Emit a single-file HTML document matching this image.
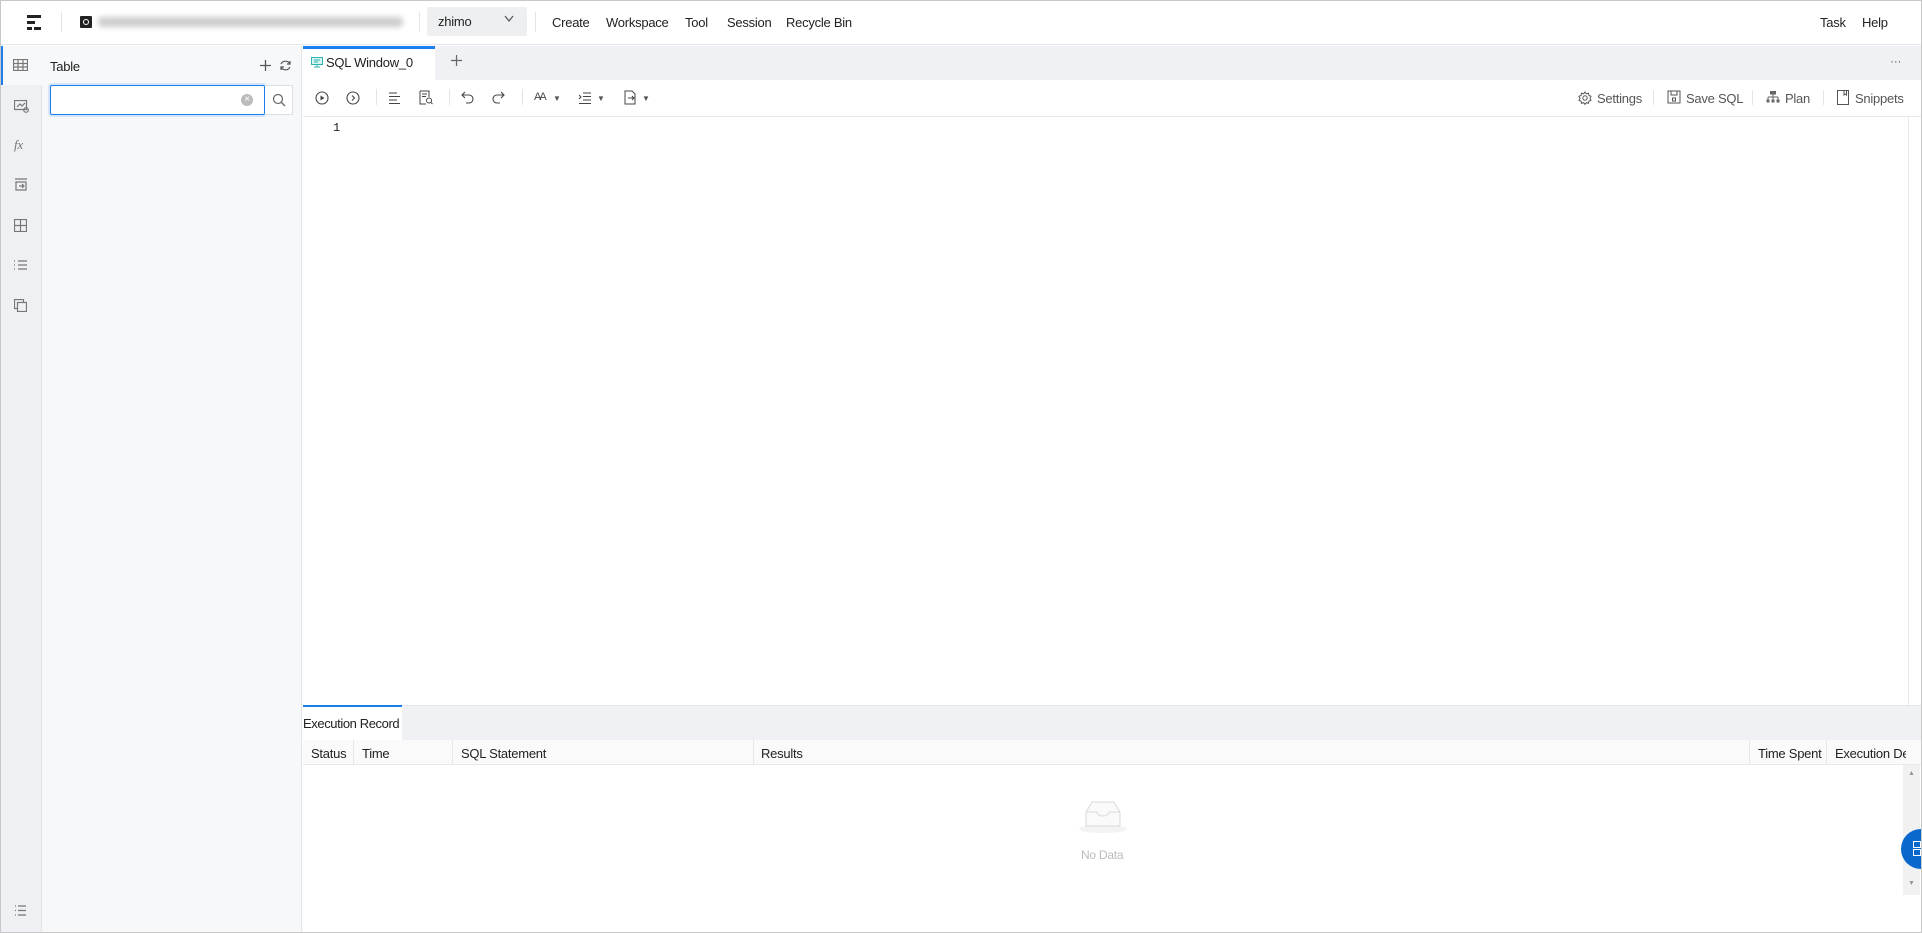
<!DOCTYPE html>
<html><head><meta charset="utf-8"><style>
*{box-sizing:border-box;margin:0;padding:0}
body{width:1922px;height:933px;overflow:hidden;font-family:"Liberation Sans","Noto Sans CJK SC",sans-serif;font-size:13px;letter-spacing:-0.25px;color:#333;background:#fff;position:relative}
.a{position:absolute}
.frame{left:0;top:0;width:1922px;height:933px;border:1px solid #c8c8c8;pointer-events:none;z-index:10}
svg{display:block}
.ic{stroke:#777;fill:none;stroke-width:1.2}
</style></head><body>
<div class="a frame"></div>
<div class="a" style="left:0;top:0;width:1922px;height:45px;border-bottom:1px solid #e4e6ea;background:#fff"></div>
<div class="a" style="left:27px;top:15px"><svg width="16" height="15"><rect x="0" y="0" width="14" height="3" fill="#222"/><rect x="0" y="6" width="8" height="3" fill="#222"/><rect x="0" y="12" width="5" height="3" fill="#222"/><rect x="7" y="12" width="7" height="3" fill="#222"/></svg></div>
<div class="a" style="left:61px;top:12px;width:1px;height:20px;background:#e5e5e5"></div>
<div class="a" style="left:80px;top:16px;width:12px;height:12px;background:#222;border-radius:1px"><div style="margin:3px;width:6px;height:6px;border:1.5px solid #fff;border-radius:50%"></div></div>
<div class="a" style="left:98px;top:17px;width:305px;height:10px;background:#ccc;filter:blur(3px);border-radius:4px"></div>
<div class="a" style="left:419px;top:12px;width:1px;height:20px;background:#e5e5e5"></div>
<div class="a" style="left:427px;top:7px;width:100px;height:29px;background:#eeeff1;border-radius:2px"></div>
<div class="a" style="left:438px;top:14px;font-size:13px;color:#222">zhimo</div>
<div class="a" style="left:504px;top:15px"><svg width="10" height="8"><path d="M1 1 L5 6 L9 1" stroke="#555" fill="none" stroke-width="1.2"/></svg></div>
<div class="a" style="left:535px;top:12px;width:1px;height:20px;background:#e5e5e5"></div>
<div class="a" style="left:552px;top:15px;color:#222">Create</div>
<div class="a" style="left:606px;top:15px;color:#222">Workspace</div>
<div class="a" style="left:685px;top:15px;color:#222">Tool</div>
<div class="a" style="left:727px;top:15px;color:#222">Session</div>
<div class="a" style="left:786px;top:15px;color:#222">Recycle Bin</div>
<div class="a" style="left:1820px;top:15px;color:#222">Task</div>
<div class="a" style="left:1862px;top:15px;color:#222">Help</div>
<div class="a" style="left:1px;top:46px;width:41px;height:886px;background:#eef0f3;border-right:1px solid #e2e4e8"></div>
<div class="a" style="left:1px;top:46px;width:41px;height:39px;background:#f7f8fa;border-left:2px solid #1a7df0"></div>
<div class="a" style="left:13px;top:59px"><svg width="15" height="12"><rect x=".5" y=".5" width="14" height="11" class="ic"/><path d="M.5 4.5H14.5M.5 8H14.5M5 .5V11.5M10 .5V11.5" class="ic"/></svg></div>
<div class="a" style="left:14px;top:100px"><svg width="15" height="13"><rect x=".5" y=".5" width="12" height="9" class="ic"/><path d="M3 7L6 4L8 6L11 3" class="ic"/><circle cx="12" cy="10" r="2.3" class="ic"/></svg></div>
<div class="a" style="left:14px;top:137px;font-style:italic;color:#777;font-family:'Liberation Serif',serif;font-size:13px">fx</div>
<div class="a" style="left:14px;top:178px"><svg width="14" height="13"><path d="M1 1H13M2 4H12V12H2Z" class="ic"/><path d="M5 8H10M8 6L10 8L8 10" class="ic"/></svg></div>
<div class="a" style="left:14px;top:219px"><svg width="13" height="13"><rect x=".5" y=".5" width="12" height="12" class="ic"/><path d="M6.5 .5V12.5M.5 6.5H12.5" class="ic"/></svg></div>
<div class="a" style="left:13px;top:259px"><svg width="15" height="12"><path d="M5 2H14M5 6H14M5 10H14" class="ic"/><path d="M1 2H2M1 6H2M1 10H2" class="ic"/></svg></div>
<div class="a" style="left:14px;top:299px"><svg width="13" height="13"><rect x=".5" y=".5" width="9" height="9" class="ic"/><rect x="3.5" y="3.5" width="9" height="9" class="ic" style="fill:#eef0f3"/></svg></div>
<div class="a" style="left:14px;top:905px"><svg width="13" height="11"><path d="M4 1H12M4 5.5H12M4 10H12M1 1H2M1 5.5H2M1 10H2" class="ic"/></svg></div>
<div class="a" style="left:42px;top:46px;width:260px;height:886px;background:#f7f8fa;border-right:1px solid #e2e4e8"></div>
<div class="a" style="left:50px;top:59px;color:#222">Table</div>
<div class="a" style="left:259px;top:59px"><svg width="13" height="13"><path d="M6.5 1V12M1 6.5H12" stroke="#555" stroke-width="1.3"/></svg></div>
<div class="a" style="left:279px;top:59px"><svg width="13" height="13"><path d="M11 5A5 5 0 0 0 2 5M2 8A5 5 0 0 0 11 8M11 2V5H8M2 11V8H5" stroke="#555" fill="none" stroke-width="1.2"/></svg></div>
<div class="a" style="left:50px;top:85px;width:215px;height:30px;border:1px solid #1a7df0;border-radius:2px;background:#fff;box-shadow:0 0 0 2px rgba(26,125,240,.15)"></div>
<div class="a" style="left:241px;top:94px;width:12px;height:12px;border-radius:50%;background:#bbb;color:#fff;font-size:10px;line-height:12px;text-align:center">×</div>
<div class="a" style="left:265px;top:85px;width:28px;height:30px;border:1px solid #dcdfe4;border-left:none;background:#fff"></div>
<div class="a" style="left:272px;top:93px"><svg width="14" height="14"><circle cx="6" cy="6" r="4.5" stroke="#666" fill="none" stroke-width="1.2"/><path d="M9.5 9.5L13 13" stroke="#666" stroke-width="1.3"/></svg></div>
<div class="a" style="left:303px;top:46px;width:1618px;height:34px;background:#f0f1f4"></div>
<div class="a" style="left:303px;top:46px;width:132px;height:34px;background:#fff;border-top:3px solid #1a7df0"></div>
<div class="a" style="left:311px;top:57px"><svg width="12" height="11"><rect x=".5" y=".5" width="11" height="7" stroke="#2bb5b0" fill="#d9f3f2"/><path d="M3 10H9M6 8V10M3 3H9M3 5H7" stroke="#2bb5b0"/></svg></div>
<div class="a" style="left:326px;top:55px;color:#222">SQL Window_0</div>
<div class="a" style="left:450px;top:54px"><svg width="13" height="13"><path d="M6.5 1V12M1 6.5H12" stroke="#666" stroke-width="1.2"/></svg></div>
<div class="a" style="left:1890px;top:54px;color:#666;font-size:12px">···</div>
<div class="a" style="left:303px;top:80px;width:1618px;height:37px;background:#fff;border-bottom:1px solid #e8e8e8"></div>
<div class="a" style="left:315px;top:91px"><svg width="14" height="14"><circle cx="7" cy="7" r="6" stroke="#444" fill="none" stroke-width="1.1"/><path d="M5.5 4.5L9.5 7L5.5 9.5Z" fill="#444"/></svg></div>
<div class="a" style="left:346px;top:91px"><svg width="14" height="14"><circle cx="7" cy="7" r="6" stroke="#444" fill="none" stroke-width="1.1"/><path d="M6 4.5L8.5 7L6 9.5" stroke="#444" fill="none" stroke-width="1.1"/></svg></div>
<div class="a" style="left:376px;top:89px;width:1px;height:16px;background:#e5e5e5"></div>
<div class="a" style="left:388px;top:92px"><svg width="13" height="12"><path d="M1 1H9M1 4.5H12M1 8H9M1 11.5H12" stroke="#444" stroke-width="1"/></svg></div>
<div class="a" style="left:419px;top:90px"><svg width="14" height="15"><path d="M1 1H10V7M1 1V14H7" stroke="#444" fill="none"/><path d="M3 4H8M3 6.5H7" stroke="#444"/><circle cx="10" cy="10.5" r="2.5" stroke="#444" fill="none"/><path d="M12 12.5L13.5 14" stroke="#444"/></svg></div>
<div class="a" style="left:449px;top:89px;width:1px;height:16px;background:#e5e5e5"></div>
<div class="a" style="left:461px;top:91px"><svg width="13" height="13"><path d="M4 1L1 4L4 7M1 4H8A4 4 0 0 1 8 12H5" stroke="#444" fill="none" stroke-width="1.1"/></svg></div>
<div class="a" style="left:492px;top:91px"><svg width="13" height="13"><path d="M9 1L12 4L9 7M12 4H5A4 4 0 0 0 5 12H8" stroke="#444" fill="none" stroke-width="1.1"/></svg></div>
<div class="a" style="left:522px;top:89px;width:1px;height:16px;background:#e5e5e5"></div>
<div class="a" style="left:534px;top:91px;font-size:11px;color:#444;letter-spacing:-2px">AA</div>
<div class="a" style="left:553px;top:94px;font-size:8px;color:#555">▼</div>
<div class="a" style="left:578px;top:92px"><svg width="14" height="12"><path d="M5 1H13M5 4.5H13M5 8H13M1 11.5H13M1 3L3 5L1 7" stroke="#444" fill="none"/></svg></div>
<div class="a" style="left:597px;top:94px;font-size:8px;color:#555">▼</div>
<div class="a" style="left:624px;top:90px"><svg width="14" height="15"><path d="M1 1H8L11 4V14H1Z" stroke="#444" fill="none"/><path d="M4 8H10M8 6L10 8L8 10" stroke="#444" fill="none"/></svg></div>
<div class="a" style="left:642px;top:94px;font-size:8px;color:#555">▼</div>
<div class="a" style="left:1578px;top:91px"><svg width="14" height="14"><circle cx="7" cy="7" r="2.2" stroke="#555" fill="none"/><path d="M7 1L8.3 2.8L10.5 2.2L10.9 4.4L13 5.3L12 7.3L13 9.3L10.9 10.1L10.5 12.3L8.3 11.6L7 13.4L5.7 11.6L3.5 12.3L3.1 10.1L1 9.3L2 7.3L1 5.3L3.1 4.4L3.5 2.2L5.7 2.8Z" stroke="#555" fill="none"/></svg></div>
<div class="a" style="left:1597px;top:91px;color:#555">Settings</div>
<div class="a" style="left:1653px;top:90px;width:1px;height:15px;background:#e5e5e5"></div>
<div class="a" style="left:1667px;top:90px"><svg width="14" height="14"><path d="M1 1H13V13H1Z" stroke="#555" fill="none"/><path d="M4 1V5H10V1" stroke="#555" fill="none"/><rect x="5.5" y="8" width="3" height="3" stroke="#555" fill="none"/></svg></div>
<div class="a" style="left:1686px;top:91px;color:#555">Save SQL</div>
<div class="a" style="left:1752px;top:90px;width:1px;height:15px;background:#e5e5e5"></div>
<div class="a" style="left:1766px;top:90px"><svg width="14" height="14"><rect x="4" y="1" width="6" height="3.5" fill="#666"/><path d="M7 4.5V7M2 7H12M2 7V9.5M7 7V9.5M12 7V9.5" stroke="#666" fill="none"/><rect x="0.5" y="9.5" width="3" height="3" fill="#666"/><rect x="5.5" y="9.5" width="3" height="3" fill="#666"/><rect x="10.5" y="9.5" width="3" height="3" fill="#666"/></svg></div>
<div class="a" style="left:1785px;top:91px;color:#555">Plan</div>
<div class="a" style="left:1823px;top:90px;width:1px;height:15px;background:#e5e5e5"></div>
<div class="a" style="left:1837px;top:90px"><svg width="12" height="15"><path d="M.5 .5H11.5V14.5H.5Z" stroke="#555" fill="none"/><path d="M7 .5V5L8.3 4L9.5 5V.5" stroke="#555" fill="none"/></svg></div>
<div class="a" style="left:1855px;top:91px;color:#555">Snippets</div>
<div class="a" style="left:333px;top:121px;color:#222;font-family:'Liberation Mono',monospace;font-size:12px">1</div>
<div class="a" style="left:1908px;top:117px;width:1px;height:589px;background:#e8e8e8"></div>
<div class="a" style="left:303px;top:705px;width:1618px;height:35px;background:#f0f1f4;border-top:1px solid #e4e6ea"></div>
<div class="a" style="left:303px;top:705px;width:99px;height:35px;background:#fff;border-top:2px solid #1a7df0"></div>
<div class="a" style="left:303px;top:716px;color:#222;letter-spacing:-.4px">Execution Record</div>
<div class="a" style="left:303px;top:740px;width:1618px;height:25px;background:#fafafa;border-bottom:1px solid #e8e8e8"></div>
<div class="a" style="left:353px;top:740px;width:1px;height:25px;background:#e8e8e8"></div>
<div class="a" style="left:452px;top:740px;width:1px;height:25px;background:#e8e8e8"></div>
<div class="a" style="left:753px;top:740px;width:1px;height:25px;background:#e8e8e8"></div>
<div class="a" style="left:1749px;top:740px;width:1px;height:25px;background:#e8e8e8"></div>
<div class="a" style="left:1826px;top:740px;width:1px;height:25px;background:#e8e8e8"></div>
<div class="a" style="left:311px;top:746px;color:#222">Status</div>
<div class="a" style="left:362px;top:746px;color:#222">Time</div>
<div class="a" style="left:461px;top:746px;color:#222">SQL Statement</div>
<div class="a" style="left:761px;top:746px;color:#222">Results</div>
<div class="a" style="left:1758px;top:746px;color:#222">Time Spent</div>
<div class="a" style="left:1835px;top:746px;width:71px;overflow:hidden;white-space:nowrap;color:#222">Execution Details</div>
<div class="a" style="left:1903px;top:765px;width:17px;height:130px;background:#f1f1f1"></div>
<div class="a" style="left:1908px;top:770px;font-size:7px;color:#999">▲</div>
<div class="a" style="left:1908px;top:880px;font-size:7px;color:#999">▼</div>
<div class="a" style="left:1078px;top:798px"><svg width="50" height="36"><ellipse cx="25" cy="31" rx="24" ry="4" fill="#f3f3f3"/><path d="M8 14L14 4H36L42 14V28H8Z" stroke="#d9d9d9" fill="#fafafa"/><path d="M8 14H19A6 4 0 0 0 31 14H42" stroke="#d9d9d9" fill="none"/></svg></div>
<div class="a" style="left:1081px;top:848px;color:#bbb;font-size:12px">No Data</div>
<div class="a" style="left:1901px;top:829px;width:40px;height:40px;border-radius:50%;background:#0a67cc"></div>
<div class="a" style="left:1913px;top:841px"><svg width="9" height="16"><rect x=".5" y=".5" width="7" height="6" stroke="#fff" fill="none"/><rect x=".5" y="8.5" width="7" height="6" stroke="#fff" fill="none"/></svg></div>
</body></html>
